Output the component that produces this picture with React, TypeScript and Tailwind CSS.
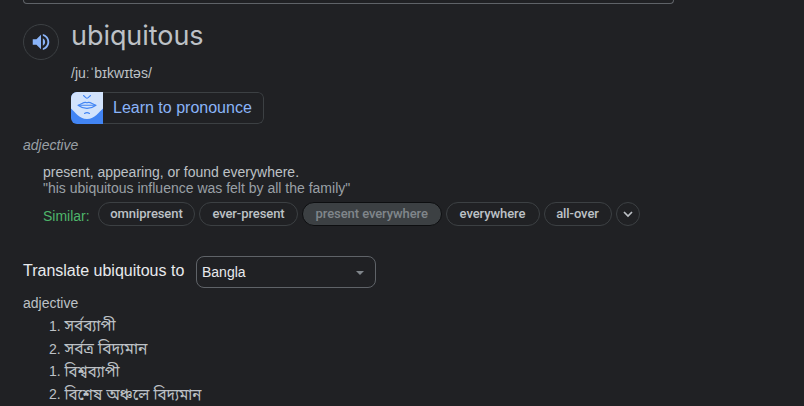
import React from "react";

function Chip({ label, width, active = false }: { label: string; width: number; active?: boolean }) {
  return (
    <button
      style={{ width }}
      className={`flex h-6 shrink-0 items-center justify-center whitespace-nowrap rounded-full border font-['Roboto',sans-serif] text-[13px] font-medium tracking-[-0.08px] ${
        active ? "border-[#0d0e10] bg-[#3c4043] text-[#80868b]" : "border-[#3c4043] text-[#bdc1c6]"
      }`}
    >
      {label}
    </button>
  );
}

function SpeakerButton() {
  return (
    <button className="mt-[20px] flex size-9 shrink-0 items-center justify-center rounded-full border border-[#3c4043]">
      <svg viewBox="0 0 24 24" className="size-[22px] fill-[#8ab4f8]">
        <path d="M3 9v6h4l5 5V4L7 9H3zm13.5 3c0-1.77-1.02-3.29-2.5-4.03v8.05c1.48-.73 2.5-2.25 2.5-4.02zM14 3.23v2.06c2.89.86 5 3.54 5 6.71s-2.11 5.85-5 6.71v2.06c4.01-.91 7-4.49 7-8.77s-2.99-7.86-7-8.77z" />
      </svg>
    </button>
  );
}

function MouthIcon() {
  return (
    <svg viewBox="0 0 32 32" className="size-8 shrink-0" fill="none">
      <path fill="#4285f4" d="M0 0h32v32H0z" />
      <path fill="#d2e3fc" d="M0 0h32v16.500C28 20 24 27 16 27S4 20 0 16.500z" />
      <g stroke="#4285f4" strokeWidth="1.100" strokeLinecap="round" strokeLinejoin="round">
        <path d="M12.500 3.500l2.300 2.100c.7.600 1.700.600 2.400 0L19.500 3.500" />
        <path d="M7 13.300c3-1 5.500-3 7.500-2.900.7.100 1 .4 1.500.4s.8-.3 1.500-.4c2-.1 4.500 1.900 7.500 2.900-3 2.300-5.500 3.100-9 3.100s-6-.8-9-3.100z" />
        <path d="M8 13.300h16M13.500 21.500c1.500-1.100 3.500-1.100 5 0" />
      </g>
    </svg>
  );
}

function Row({ n, text, width }: { n: string; text: string; width: number }) {
  return (
    <li className="flex h-[22.700px] items-center">
      <span className="w-[17px] pl-[1px]">{n}</span>
      <svg width={width + 4} height="23" className="shrink-0 overflow-visible">
        <text x="-0.5" y="17" textLength={width} lengthAdjust="spacingAndGlyphs" fill="#bdc1c6" className="font-['Noto_Sans_Bengali','Noto_Sans',sans-serif] text-[16px]">
          {text}
        </text>
      </svg>
    </li>
  );
}

export default function App() {
  return (
    <main className="h-[406px] w-[804px] overflow-hidden bg-[#202124] pl-[23px] font-['Liberation_Sans',Arial,sans-serif] text-[14px] leading-4 text-[#bdc1c6]">
      <div className="h-1 w-[651px] rounded-b-lg border border-t-0 border-[#5f6368]" />

      <header className="flex gap-3">
        <SpeakerButton />
        <div>
          <h1 className="mt-[13px] h-[38px] font-['Inter',sans-serif] text-[27px] leading-[38px] tracking-[-0.05px]">ubiquitous</h1>
          <p className="mt-[10px] h-4">/juːˈbɪkwɪtəs/</p>
          <button className="mt-[11px] flex h-8 w-[193px] overflow-hidden rounded-md text-[16px] text-[#8ab4f8]">
            <MouthIcon />
            <span className="flex h-8 grow items-center whitespace-nowrap rounded-r-md border border-l-0 border-[#3c4043] pl-[10px]">
              Learn to pronounce
            </span>
          </button>
        </div>
      </header>

      <p className="mt-[13px] italic text-[#9aa0a6]">adjective</p>
      <section className="mt-[11px] pl-5">
        <p>present, appearing, or found everywhere.</p>
        <p className="text-[#9aa0a6]">"his ubiquitous influence was felt by all the family"</p>
        <div className="mt-[6px] flex h-6">
          <span className="mt-1.5 w-[55px] shrink-0 text-[#4eb66a]">Similar:</span>
          <div className="flex gap-1">
            <Chip label="omnipresent" width={97} />
            <Chip label="ever-present" width={99} />
            <Chip label="present everywhere" width={139.500} active />
            <Chip label="everywhere" width={94} />
            <Chip label="all-over" width={68} />
            <button className="flex size-6 items-center justify-center rounded-full border border-[#3c4043]">
              <svg viewBox="0 0 10 7" className="h-[7px] w-[10px]" fill="none" stroke="#bdc1c6" strokeWidth="1.700">
                <path d="M1 1l4 4 4-4" />
              </svg>
            </button>
          </div>
        </div>
      </section>

      <div className="mt-[30px] flex h-8 items-center">
        <span className="w-[173px] pb-0.5 text-[16px] text-[#e8eaed]">Translate ubiquitous to</span>
        <button className="flex h-8 w-[180px] items-center justify-between rounded-lg border border-[#5f6368] pl-[5px] pr-[11px] text-[#e8eaed]">
          Bangla
          <svg viewBox="0 0 8 4" className="mt-0.5 h-1 w-2 fill-[#80868b]">
            <path d="M0 0h8L4 4z" />
          </svg>
        </button>
      </div>

      <p className="mt-[7px]">adjective</p>
      <ol className="mt-[3.600px] pl-[25px]">
        <Row n="1." text="সর্বব্যাপী" width={51} />
        <Row n="2." text="সর্বত্র বিদ্যমান" width={83} />
        <Row n="1." text="বিশ্বব্যাপী" width={55} />
        <Row n="2." text="বিশেষ অঞ্চলে বিদ্যমান" width={137} />
      </ol>
    </main>
  );
}
